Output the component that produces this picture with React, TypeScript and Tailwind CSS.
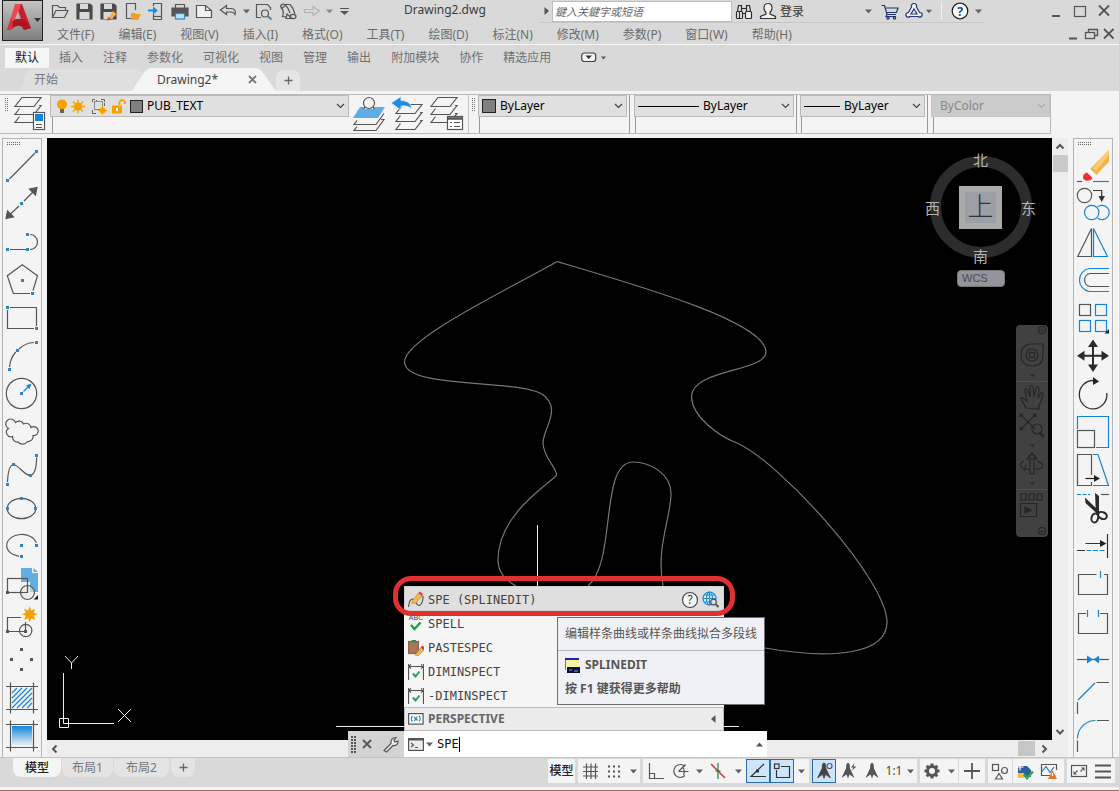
import React, { useState } from "react";

type Kids = { children?: React.ReactNode };

const G = "#555";
const B = "#1485d6";

/* ---------- small drawing helpers ---------- */

function Dot({ x, y, c = "#2f86bd" }: { x: number; y: number; c?: string }) {
  return <rect x={Math.round(x - 1.5)} y={Math.round(y - 1.5)} width="3" height="3" fill={c} stroke="none" />;
}

function Icon({ w = 22, h = 20, children }: Kids & { w?: number; h?: number }) {
  return (
    <svg width={w} height={h} viewBox={`0 0 ${w} ${h}`} fill="none" stroke={G} strokeWidth="1.2" aria-hidden="true">
      {children}
    </svg>
  );
}

function Caret({ c = "#606060" }: { c?: string }) {
  return (
    <svg width="7" height="5" viewBox="0 0 7 5" aria-hidden="true">
      <path d="M0 0.5H7L3.5 4.5Z" fill={c} />
    </svg>
  );
}

function Chevron({ c = "#444" }: { c?: string }) {
  return (
    <svg className="pointer-events-none shrink-0" width="9" height="6" viewBox="0 0 9 6" fill="none" stroke={c} strokeWidth="1.2" aria-hidden="true">
      <path d="M1 1L4.5 4.5L8 1" />
    </svg>
  );
}

/* ---------- left and right tool columns ---------- */

type Tool = { name: string; art: React.ReactNode };

const hatchFrame = <path d="M7.5 4.5V35.5M30.5 4.5V35.5M3 8.5H35M3 31.5H35" />;

const drawTools: Tool[] = [
  { name: "直线", art: (<><path d="M6.500 33L32 7" /><Dot x={4.700} y={34.700} /><Dot x={33.700} y={5} /></>) },
  {
    name: "构造线",
    art: (<><path d="M7 30.500L16 22M21 17L30 8" /><path d="M3 34.500L4.500 27L10.500 33ZM34 3.500L32.500 11L26.500 5Z" fill={G} /><Dot x={18.500} y={19.300} /></>),
  },
  { name: "多段线", art: (<><path d="M7 27.500H23M27 12.500A7.500 7.500 0 0 1 27 27.500" /><Dot x={4.700} y={27.500} /><Dot x={24.700} y={27.500} /><Dot x={24.700} y={12.500} /></>) },
  { name: "多边形", art: (<><path d="M27 33.500H10.300L4.300 15.700L19.300 4.700L34.500 15.700L30 30.500" /><Dot x={19.500} y={20.300} /><Dot x={29.500} y={33.300} /></>) },
  { name: "矩形", art: (<><path d="M7 9.500H33.500V28M31 30.500H4.500V12" /><Dot x={4.700} y={9.500} /><Dot x={33.700} y={30.500} /></>) },
  { name: "圆弧", art: (<><path d="M6.500 31Q7.500 21.500 12.800 16M16 13Q22 7 31 6.500" /><Dot x={6.300} y={33.300} /><Dot x={14.300} y={14.500} /><Dot x={33.700} y={6.500} /></>) },
  {
    name: "圆",
    art: (<><circle cx="18.500" cy="19.500" r="15.200" /><path d="M20.500 17.500L25 13" stroke={B} /><path d="M28.500 9.500L26.500 15L23 11.500Z" fill={B} stroke="none" /><Dot x={18.500} y={19.500} /></>),
  },
  {
    name: "修订云线",
    art: (<path d="M5.500 16.500A5 5 0 1 1 12.500 10.500A5 5 0 0 1 20.500 12A5 5 0 0 1 28 15.500A4.500 4.500 0 1 1 30 23.500A5 5 0 0 1 24.500 29.500A6 6 0 0 1 15 30A5 5 0 0 1 9.500 24.500A4.500 4.500 0 0 1 5.500 16.500Z" />),
  },
  { name: "样条曲线", art: (<><path d="M4.500 32C5 20 7 15 10.300 14.500C15 14.500 21 25 27 25.500C32 25 33.500 15 33.700 7.500" /><Dot x={4.500} y={34.300} /><Dot x={10.300} y={14.500} /><Dot x={27.700} y={25.300} /><Dot x={33.700} y={5} /></>) },
  { name: "椭圆", art: (<><ellipse cx="18.500" cy="20.500" rx="14.200" ry="10.200" /><Dot x={18.500} y={10.300} /><Dot x={4.500} y={20.500} /><Dot x={32.700} y={20.500} /></>) },
  { name: "椭圆弧", art: (<><path d="M33.300 17A15 11 0 1 0 16 30.300" /><Dot x={33.700} y={19.500} /><Dot x={18.500} y={19.500} /><Dot x={18.500} y={30.300} /></>) },
  {
    name: "插入块",
    art: (
      <>
        <path d="M18 4H29V9H35V28H27V18H18Z" fill="#62aee2" stroke="none" />
        <path d="M30.500 4L35 8H30.500Z" fill="#62aee2" stroke="none" />
        <rect x="4.500" y="14.500" width="20" height="14" />
        <circle cx="24.500" cy="28.500" r="7" fill="#e6e6e6" fillOpacity="0.600" />
        <path d="M24.500 21V28.500H17" />
        <rect x="3" y="27" width="3" height="3" fill={G} stroke="none" />
        <path d="M35 31V35.500H30.500Z" fill="#222" stroke="none" />
      </>
    ),
  },
  {
    name: "创建块",
    art: (
      <>
        <path d="M18 15.500H4.500V29.500H22.500V20" />
        <circle cx="22.700" cy="28.500" r="6.200" />
        <rect x="3" y="28" width="3" height="3" fill={G} stroke="none" />
        <rect x="21" y="28" width="3" height="3" fill={G} stroke="none" />
        <path d="M26.700 4.300L28.200 8.500L32.300 6.700L30.600 10.800L34.800 12.300L30.600 13.800L32.300 17.900L28.200 16.200L26.700 20.300L25.200 16.200L21.100 17.900L22.800 13.800L18.700 12.300L22.800 10.800L21.100 6.700L25.200 8.500Z" fill="#f3a200" stroke="none" />
      </>
    ),
  },
  { name: "点", art: (<g fill={G} stroke="none"><rect x="17" y="8" width="3" height="3" /><rect x="7" y="18" width="3" height="3" /><rect x="27" y="18" width="3" height="3" /><rect x="17" y="28" width="3" height="3" /></g>) },
  {
    name: "图案填充",
    art: (<><path d="M9 15L14 10M9 20L19 10M9 25L24 10M9 30L29 10M14 30L29 15M19 30L29 20M24 30L29 25" stroke={B} strokeWidth="1.2" />{hatchFrame}</>),
  },
  {
    name: "渐变色",
    art: (
      <>
        <defs>
          <linearGradient id="fade" x1="0" y1="0" x2="0" y2="1">
            <stop offset="0" stopColor="#0f86e0" />
            <stop offset="1" stopColor="#f4f4f4" />
          </linearGradient>
        </defs>
        <rect x="9" y="10" width="20" height="20" fill="url(#fade)" stroke="none" />
        {hatchFrame}
      </>
    ),
  },
];

const modifyTools: Tool[] = [
  {
    name: "删除",
    art: (
      <>
        <path d="M3 35.500H8" />
        <path d="M19 35.500H35" stroke={B} />
        <path d="M16 23L35 4V15.500L22.500 29Z" fill="#f2b347" stroke="none" />
        <path d="M30 9L35 4V9L22 25L19 22Z" fill="#f9cd74" stroke="none" />
        <path d="M13.500 25.500L16 23L22.500 29L19.500 32Z" fill="#fff" stroke="none" />
        <path d="M13 26.500L18.500 32C17 35 12 36 9.500 33C8 30 10 27.500 13 26.500Z" fill="#ee2f36" stroke="none" />
      </>
    ),
  },
  {
    name: "复制",
    art: (
      <>
        <circle cx="10.500" cy="11.500" r="7.200" />
        <path d="M19 6.500H27.700V13" stroke="#333" />
        <path d="M24.500 12H31L27.700 18Z" fill="#333" stroke="none" />
        <circle cx="17.700" cy="28.500" r="7.200" stroke={B} />
        <path d="M23.500 22.900A7.200 7.200 0 1 1 23.500 34.100" stroke={B} />
      </>
    ),
  },
  { name: "镜像", art: (<><path d="M3.700 34.500L17.500 6.500V34.500Z" /><path d="M33.500 34.500L19.500 6.500V34.500Z" stroke={B} /></>) },
  { name: "偏移", art: (<><path d="M35 8.500H15A11.700 11.700 0 0 0 15 31.500H35" stroke={B} /><path d="M35 13.500H16A6.600 6.600 0 0 0 16 26.500H35" /></>) },
  {
    name: "阵列",
    art: (<><rect x="5.500" y="6.500" width="11" height="11" /><g stroke={B}><rect x="21.500" y="6.500" width="11" height="11" /><rect x="5.500" y="22.500" width="11" height="11" /><rect x="21.500" y="22.500" width="11" height="11" /></g><path d="M35 31V35.500H30.500Z" fill="#222" stroke="none" /></>),
  },
  {
    name: "移动",
    art: (<><path d="M19 8V32M7 19.700H31" stroke="#2b2b2b" strokeWidth="2" /><path d="M19 3.500L24 11H14ZM19 36L14 28.500H24ZM3 19.700L10.500 14.700V24.700ZM35 19.700L27.500 24.700V14.700Z" fill="#2b2b2b" stroke="none" /></>),
  },
  { name: "旋转", art: (<><path d="M19 6.500A13.800 14.200 0 1 0 32.800 19" stroke="#333" strokeWidth="1.300" /><path d="M19 3V11L25 7.500Z" fill="#222" stroke="none" /></>) },
  { name: "缩放", art: (<><path d="M3.500 17V4.500H34.500V35.500H22" stroke={B} /><rect x="3.500" y="18.500" width="17" height="17" /></>) },
  {
    name: "拉伸",
    art: (<><path d="M17.500 25V4.500H3.500V35.500H17.500V32" /><path d="M19 4.500H24L34.500 35.500H19" stroke={B} /><path d="M11.500 28.500H21" stroke="#222" /><path d="M20 25L26 28.500L20 32Z" fill="#222" stroke="none" /></>),
  },
  {
    name: "修剪",
    art: (
      <>
        <path d="M3 6.500H16" stroke={B} strokeDasharray="4 1.500" />
        <path d="M27 6.500H35" />
        <path d="M11 9.500L26 24L23.500 26L11.500 15ZM21 5L25 8V25L22 26.500Z" fill="#2b2b2b" stroke="none" />
        <ellipse cx="20.800" cy="30" rx="3.300" ry="4.500" stroke="#2b2b2b" strokeWidth="2" transform="rotate(15 20.800 30)" />
        <ellipse cx="28.500" cy="27.500" rx="3.300" ry="4.500" stroke="#2b2b2b" strokeWidth="2" transform="rotate(-65 28.500 27.500)" />
      </>
    ),
  },
  {
    name: "延伸",
    art: (<><path d="M33.500 8V32M3 24.500H11M11.500 17.500H28" stroke="#333" /><path d="M26 14V21L32.500 17.500Z" fill="#222" stroke="none" /><path d="M12.500 24.500H32" stroke={B} strokeDasharray="5 1.500" /></>),
  },
  { name: "打断于点", art: (<><path d="M22.500 10.500H4.500V30.500H33.500V10.500H30" /><path d="M26.500 7V14" stroke={B} /></>) },
  { name: "打断", art: (<><path d="M12 11.500H4.500V31.500H33.500V11.500H26" /><path d="M13.500 8V15M24.500 8V15" stroke={B} /></>) },
  { name: "合并", art: (<><path d="M3 19.500H35" /><path d="M13 15.500L19 19.500L13 23.500ZM25 15.500L19.500 19.500L25 23.500Z" fill={B} stroke="none" /></>) },
  { name: "倒角", art: (<><path d="M22.500 4.500H35M3.500 24V36" /><path d="M21 5L4 22" stroke={B} /></>) },
  { name: "圆角", art: (<><path d="M23 4.500H35M3.500 24.500V36" /><path d="M21.500 4.500C12 4.500 3.500 12 3.500 22.500" stroke={B} /></>) },
];

function Grip() {
  return (
    <svg width="14" height="4" viewBox="0 0 14 4" stroke="#666" strokeDasharray="1 1" aria-hidden="true">
      <path d="M0 0.500H14M0 2.500H14" />
    </svg>
  );
}

function ToolColumn({ tools, label }: { tools: Tool[]; label: string }) {
  return (
    <nav aria-label={label} className="flex w-10 shrink-0 flex-col border-x border-t border-[#b4b4b4] bg-[#f4f4f4]">
      <div className="flex h-[7px] items-end pl-1">
        <Grip />
      </div>
      {tools.map((t) => (
        <button key={t.name} aria-label={t.name} className="h-[38px] w-[38px] hover:bg-[#dcebf7]">
          <svg width="38" height="38" viewBox="0 0 38 38" fill="none" stroke={G} strokeWidth="1.200" aria-hidden="true">
            {t.art}
          </svg>
        </button>
      ))}
    </nav>
  );
}

/* ---------- title bar ---------- */

function TitleButton({ name, width = "w-6", children }: Kids & { name: string; width?: string }) {
  return (
    <button aria-label={name} className={`flex h-[22px] shrink-0 items-center justify-center ${width}`}>
      {children}
    </button>
  );
}

function QuickAccess() {
  return (
    <div className="flex items-center">
      <TitleButton name="打开">
        <Icon><path d="M3.500 16.500V4.500H8.500L10.500 6.500H16.500V9M3.500 16.500L7 9.500H19L15.500 16.500Z" /></Icon>
      </TitleButton>
      <TitleButton name="保存">
        <Icon><path d="M4 3H17L19 5V18H4Z" fill="#4a4a4a" stroke="#4a4a4a" /><rect x="7" y="3" width="8" height="5" fill="#d9d9d9" stroke="none" /><rect x="6.500" y="11" width="10" height="7" fill="#d9d9d9" stroke="none" /></Icon>
      </TitleButton>
      <TitleButton name="另存为">
        <Icon><path d="M4 3H17L19 5V18H4Z" fill="#4a4a4a" stroke="#4a4a4a" /><rect x="7" y="3" width="8" height="5" fill="#d9d9d9" stroke="none" /><rect x="6.500" y="11" width="9" height="7" fill="#d9d9d9" stroke="none" /><path d="M11 17L16 10L19.500 13L14 19Z" fill="#f6b04a" stroke="none" /><path d="M11 16L15 18.500L10 19.500Z" fill="#e03a3a" stroke="none" /></Icon>
      </TitleButton>
      <TitleButton name="从移动设备打开">
        <Icon><path d="M14.500 9V2.500H5.500V17.500H10" /><path d="M10 12H14L15 13H20L17 19H10Z" fill="#f0a020" stroke="none" /></Icon>
      </TitleButton>
      <TitleButton name="保存到移动设备">
        <Icon><path d="M8.500 5V2.500H16.500V18.500H8.500V13" /><path d="M8 15.500H16" /><path d="M3 8.500H8V5.500L13 9.500L8 13.500V10.500H3Z" fill="#1b8be0" stroke="none" /></Icon>
      </TitleButton>
      <TitleButton name="打印">
        <Icon><path d="M6.500 7V3.500H15.500V7" /><path d="M3 7H19V15H16V12H6V15H3Z" fill="#555" stroke="#555" /><rect x="6.500" y="12.500" width="9" height="5.500" fill="#bfe0f7" stroke="#3a88c0" /></Icon>
      </TitleButton>
      <TitleButton name="新建">
        <Icon><path d="M3.500 4.500H12.500L18.500 9.500V16.500H3.500Z" fill="#efefef" /><path d="M12.500 4.500V9.500H18.500" /></Icon>
      </TitleButton>
      <TitleButton name="放弃">
        <Icon><path d="M3.500 9L9.500 4.500V7.500H14C18 7.500 19 10.500 18 13.500C17 11.500 15.500 11 13.500 11H9.500V13.500Z" /></Icon>
      </TitleButton>
      <TitleButton name="放弃列表" width="w-3"><Caret /></TitleButton>
      <TitleButton name="打印预览">
        <Icon><path d="M8 16.500H3.500V3.500H14.500L17.500 6.500V9" /><circle cx="12" cy="12.500" r="3.500" /><path d="M14.500 15L18.500 18.500" strokeWidth="1.800" stroke="#4b7fa6" /></Icon>
      </TitleButton>
      <TitleButton name="打印设置">
        <Icon><path d="M9.500 16L5.500 15.500C7 12 6 8 3.500 5.500C4 3.500 6 2.500 8 3.500L13 3.500C15.500 6 17 9 18 13" /><path d="M8 3.500C10.500 6 12 9 13 12M4 8L10 3" /><ellipse cx="16" cy="15.500" rx="3" ry="2.200" /><path d="M10 13L15 17.500L9 17.500Z" /></Icon>
      </TitleButton>
      <TitleButton name="重做">
        <Icon><path d="M3.500 8.500H12V5.500L18.500 10L12 14.500V11.500H3.500Z" stroke="#b3b3b3" /></Icon>
      </TitleButton>
      <TitleButton name="重做列表" width="w-[10px]"><Caret c="#8a8a8a" /></TitleButton>
      <TitleButton name="自定义快速访问工具栏" width="w-5">
        <svg width="9" height="8" viewBox="0 0 9 8" aria-hidden="true"><path d="M0 1H9V2H0ZM0 4H9L4.500 8Z" fill="#555" /></svg>
      </TitleButton>
    </div>
  );
}

function TitleRow() {
  return (
    <div className="flex h-6 items-start pl-[5px]">
      <QuickAccess />
      <span className="ml-[50px] h-[22px] w-[136px] shrink-0 text-[12px] leading-[20px] text-[#3c3c3c]">Drawing2.dwg</span>
      <div className="flex h-[23px] items-center border-b border-[#c6c6c6]">
        <TitleButton name="搜索选项" width="w-3">
          <svg width="5" height="8" viewBox="0 0 5 8" aria-hidden="true"><path d="M0.500 0V8L5 4Z" fill="#555" /></svg>
        </TitleButton>
        <input
          aria-label="搜索"
          placeholder="鍵入关鍵字或短语"
          className="h-[21px] w-[180px] border border-[#bdbdbd] bg-white px-[2px] text-[11px] italic outline-none placeholder:text-[#666]"
        />
        <TitleButton name="查找">
          <Icon><g stroke="#2b2b2b"><rect x="3.500" y="10.500" width="6" height="7" rx="1" fill="#efefef" /><rect x="12.500" y="10.500" width="6" height="7" rx="1" fill="#efefef" /><path d="M4.500 10.500L5.500 4.500H8.500V10.500M17.500 10.500L16.500 4.500H13.500V10.500M9 7.500H13M9.500 12.500H12.500M6.500 10.500V17" /></g></Icon>
        </TitleButton>
        <TitleButton name="用户">
          <Icon><path d="M11 2.500C14 2.500 15 4.500 15 7C15 9 14 10.500 13 11.500V13L18.500 15.500V17.500H3.500V15.500L9 13V11.500C8 10.500 7 9 7 7C7 4.500 8 2.500 11 2.500Z" fill="#f2f2f2" stroke="#333" /></Icon>
        </TitleButton>
        <button className="h-[21px] w-[82px] text-left text-[12px] leading-[21px] text-[#333]">登录</button>
        <TitleButton name="登录列表" width="w-3"><Caret /></TitleButton>
        <span className="w-1" />
        <TitleButton name="应用商店">
          <Icon><g stroke="#22356e"><path d="M2.500 4.500H5.500L8 13.500H17M6.500 7H19L17.500 11.500H8M8 13.500L7 15.500H17" /><circle cx="9" cy="17" r="1.200" /><circle cx="15.500" cy="17" r="1.200" /></g></Icon>
        </TitleButton>
        <TitleButton name="保持连接">
          <Icon><g stroke="#22356e" fill="#eef1fa"><path d="M11 2.500C13 2.500 14 4 13.500 6L16.500 11.500C19 11.500 19.500 13 19 14.500C18.500 16.500 16 16.500 15 15.500H7C6 16.500 3.500 16.500 3 14.500C2.500 13 3.500 11.500 5.500 11.500L8.500 6C8 4 9 2.500 11 2.500Z" /><path d="M11 8L14 13H8Z" /></g></Icon>
        </TitleButton>
        <TitleButton name="连接列表" width="w-[6px]"><Caret /></TitleButton>
        <span className="ml-[9px] mr-[6px] h-[18px] w-px bg-[#f0f0f0]" />
        <TitleButton name="帮助">
          <svg width="18" height="18" viewBox="0 0 18 18" aria-hidden="true">
            <circle cx="9" cy="9" r="7.800" fill="#fff" stroke="#222" strokeWidth="1.300" />
            <text x="9" y="13.500" fontSize="13" fontWeight="700" textAnchor="middle" fill="#1d4fa0" fontFamily="Noto Sans">?</text>
          </svg>
        </TitleButton>
        <TitleButton name="帮助列表" width="w-3"><Caret /></TitleButton>
      </div>
      <div className="ml-auto flex items-center pr-[3px]">
        <TitleButton name="最小化"><Icon><path d="M7 15H15" strokeWidth="2" /></Icon></TitleButton>
        <TitleButton name="最大化"><Icon><rect x="5.500" y="5.500" width="11" height="10" /></Icon></TitleButton>
        <TitleButton name="关闭"><Icon><path d="M6 4.500L16 14.500M16 4.500L6 14.500" strokeWidth="1.800" /></Icon></TitleButton>
      </div>
    </div>
  );
}

const menus = ["文件(F)", "编辑(E)", "视图(V)", "插入(I)", "格式(O)", "工具(T)", "绘图(D)", "标注(N)", "修改(M)", "参数(P)", "窗口(W)", "帮助(H)"];
const ribbonTabs = ["默认", "插入", "注释", "参数化", "可视化", "视图", "管理", "输出", "附加模块", "协作", "精选应用"];

function Header() {
  return (
    <header className="bg-[#d9d9d9]">
      <div className="flex border-b border-[#f7f7f7] pl-[2px]">
        <button aria-label="应用程序菜单" className="flex h-[41px] w-[41px] shrink-0 items-center justify-center border border-[#222] bg-linear-to-b from-[#c4c4c4] to-[#808080]">
          <svg width="39" height="39" viewBox="0 0 39 39" aria-hidden="true">
            <path d="M12 3H19L28 27L21 29L18 22H11L10 17H16.500L14 10Z" fill="#c8202a" />
            <path d="M12 3H18L13 20L9 28L4 29Z" fill="#ea4a4d" />
            <path d="M15 10L18 18H12Z" fill="#b4b4b4" />
            <path d="M4 29L9 21C13 17 20 17 23 20L28 27L21 29C19 24 14 23 9 28Z" fill="#b0141f" />
            <path d="M4 29L8 17L10 22L9 28Z" fill="#d8343a" />
            <path d="M31 17H38L34.500 21Z" fill="#333" />
          </svg>
        </button>
        <div className="min-w-0 flex-1">
          <TitleRow />
          <div className="flex h-5 items-center">
            <nav aria-label="菜单栏" className="flex gap-6 pt-[2px] pl-[14px]">
              {menus.map((m) => (
                <a key={m} href="#" className="text-[12px] leading-5 whitespace-nowrap text-[#6b6b6b]">{m}</a>
              ))}
            </nav>
            <div className="ml-auto flex pr-[1px]">
              <button aria-label="最小化图形" className="w-[18px]"><svg width="18" height="16" viewBox="0 0 18 16" aria-hidden="true"><path d="M5 12.500H13" stroke={G} strokeWidth="2" /></svg></button>
              <button aria-label="还原图形" className="w-[18px]"><svg width="18" height="16" viewBox="0 0 18 16" fill="none" stroke={G} strokeWidth="1.300" aria-hidden="true"><path d="M6.500 6.500V3.500H15.500V9.500H12.500" /><rect x="3.500" y="6.500" width="9" height="6" /></svg></button>
              <button aria-label="关闭图形" className="w-[18px]"><svg width="18" height="16" viewBox="0 0 18 16" aria-hidden="true"><path d="M4 3L13.500 12.500M13.500 3L4 12.500" stroke={G} strokeWidth="1.800" /></svg></button>
            </div>
          </div>
        </div>
      </div>

      <div className="flex h-6 items-center pl-[5px] pt-[1px]">
        {ribbonTabs.map((t, i) => (
          <button
            key={t}
            className={i === 0 ? "h-5 bg-[#f6f6f6] px-[10px] text-[12px] leading-5 whitespace-nowrap text-[#222]" : "h-5 px-[10px] text-[12px] leading-5 whitespace-nowrap text-[#707070]"}
          >
            {t}
          </button>
        ))}
        <button aria-label="功能区显示" className="ml-5 flex items-center gap-1">
          <svg width="16" height="11" viewBox="0 0 16 11" fill="none" aria-hidden="true"><rect x="0.700" y="1" width="14" height="8.500" rx="2.500" fill="#f4f4f4" stroke="#3b4453" strokeWidth="1.200" /><path d="M4.500 3.500H11L7.700 7Z" fill="#333" /></svg>
          <svg width="5" height="4" viewBox="0 0 5 4" aria-hidden="true"><path d="M0 0.500H5L2.500 3.500Z" fill="#555" /></svg>
        </button>
      </div>

      <div className="flex h-[22px] items-end pl-[20px]">
        <button className="h-[22px] w-[126px] rounded-t-[14px] bg-[#dfdfdf] pl-[14px] text-left text-[12px] leading-[22px] text-[#777] [clip-path:polygon(8px_0,100%_0,100%_100%,0_100%)]">开始</button>
        <div className="-ml-[14px] flex h-[23px] w-[144px] items-center bg-[#f5f5f5] pl-[25px] [clip-path:polygon(18px_0,124px_0,129px_2px,144px_100%,0_100%,13px_3px)]">
          <button className="w-[91px] text-left text-[12px] text-[#444]">Drawing2*</button>
          <button aria-label="关闭 Drawing2" className="shrink-0"><svg width="9" height="9" viewBox="0 0 9 9" aria-hidden="true"><path d="M1 1L8 8M8 1L1 8" stroke="#777" strokeWidth="1.800" /></svg></button>
        </div>
        <button aria-label="新图形" className="flex h-[21px] w-[24px] items-center justify-center rounded-t-[8px] bg-[#e6e6e6]">
          <svg width="9" height="9" viewBox="0 0 9 9" aria-hidden="true"><path d="M4.500 0.500V8.500M0.500 4.500H8.500" stroke="#666" strokeWidth="1.300" /></svg>
        </button>
      </div>
    </header>
  );
}

/* ---------- property toolbar ---------- */

function VGrip() {
  return (
    <svg className="mx-[3px] mt-[3px] shrink-0" width="3" height="14" viewBox="0 0 3 14" stroke="#777" strokeDasharray="1 1" aria-hidden="true">
      <path d="M0.500 0V14M2.500 0V14" />
    </svg>
  );
}

function Combo({ label, value, options, disabled, children }: Kids & { label: string; value: string; options: string[]; disabled?: boolean }) {
  const [v, setV] = useState(value);
  return (
    <div className={disabled ? "flex h-[22px] items-center border border-[#c6c6c6] bg-[#cbcbcb] pr-[3px] pl-1" : "flex h-[22px] items-center border border-[#b9b9b9] bg-[#e0e0e0] pr-[3px] pl-[3px]"}>
      {children}
      <select
        aria-label={label}
        value={v}
        disabled={disabled}
        onChange={(e) => setV(e.target.value)}
        className="min-w-0 flex-1 appearance-none bg-transparent pl-[4px] text-[12px] leading-[20px] text-black outline-none disabled:text-[#888] disabled:opacity-100"
      >
        {options.map((o) => <option key={o}>{o}</option>)}
      </select>
      <Chevron c={disabled ? "#aaa" : "#444"} />
    </div>
  );
}

function Sheets({ x = 0, y = 0 }: { x?: number; y?: number }) {
  return (
    <g transform={`translate(${x} ${y})`}>
      <path d="M8 1.500H27L20 10.500H1Z" />
      <path d="M5.500 12.500L1 18.500H20L27 9.500H25" />
      <path d="M5.500 20.500L1 26.500H20L27 17.500H25" />
    </g>
  );
}

function PropertyBar() {
  return (
    <div className="flex h-[40px] border-y border-[#b9b9b9] pl-[2px]">
      <div className="flex border-r border-[#c4c4c4]">
        <VGrip />
        <button aria-label="图层特性" className="h-[38px] w-[36px]">
          <svg width="36" height="38" viewBox="0 0 36 38" fill="none" stroke={G} strokeWidth="1.200" aria-hidden="true">
            <Sheets x={3} y={1} />
            <rect x="22.500" y="17.500" width="11" height="17" fill="#fff" />
            <rect x="24" y="19" width="8" height="7" fill="#1485d6" stroke="none" />
            <path d="M25 29.500H31M25 32.500H31" />
          </svg>
        </button>
        <div className="flex w-[302px] flex-col pl-[3px]">
          <Combo label="图层" value="PUB_TEXT" options={["PUB_TEXT", "0"]}>
            <svg width="89" height="19" viewBox="0 0 89 19" fill="none" aria-hidden="true">
              <circle cx="8" cy="7.500" r="5" fill="#f3a200" />
              <path d="M6 12H10V16H6Z" fill="#666" />
              <circle cx="24" cy="9.500" r="4" fill="#f3a200" />
              <path d="M24 2.500V16.500M17 9.500H31M19 4.500L29 14.500M29 4.500L19 14.500" stroke="#f3a200" strokeWidth="1.300" />
              <path d="M41 2.500H38.500V5M47 2.500H50.500V5M38.500 13V16.500H42M41 5L43 3M50.500 6V9" stroke="#666" />
              <rect x="40.500" y="4.500" width="8" height="8" stroke="#888" />
              <circle cx="48.500" cy="13.500" r="3" fill="#f3a200" />
              <path d="M48.500 9V18M44 13.500H53" stroke="#f3a200" />
              <rect x="58" y="8.500" width="10" height="8" fill="#f3a200" />
              <path d="M65.500 8V5A3 3 0 0 1 71 5V7" stroke="#f3a200" strokeWidth="1.800" />
              <rect x="62" y="11" width="2" height="3" fill="#fff" />
              <rect x="76.500" y="3.500" width="12" height="12" fill="#808080" stroke="#222" />
            </svg>
          </Combo>
          <span className="ml-[2px] flex-1 border-l border-[#999]" />
        </div>
        <div className="flex gap-[4px] pr-[3px] pl-[3px]">
          <button aria-label="将对象的图层设为当前" className="w-[35px]">
            <svg width="35" height="38" viewBox="0 0 35 38" fill="none" stroke={G} strokeWidth="1.200" aria-hidden="true">
              <path d="M8 12H33L26 23H1Z" fill="#5badea" stroke="none" />
              <path d="M12 14C12 10 22 10 22 14" fill="#f4f4f4" />
              <circle cx="17" cy="8" r="5.500" fill="#f4f4f4" />
              <path d="M5 25.500L2 29.500H24L32 18.500M5 31.500L2 35.500H24L32 24.500H29" />
            </svg>
          </button>
          <button aria-label="上一个图层" className="w-[35px]">
            <svg width="35" height="38" viewBox="0 0 35 38" fill="none" stroke={G} strokeWidth="1.200" aria-hidden="true">
              <g transform="translate(4 8)"><Sheets /></g>
              <path d="M0 8L10 1.500V5.500C16 5.500 20 8 21 14C17 11 14 10.500 10 11V15Z" fill="#1a8ce6" stroke="#f4f4f4" strokeWidth="0.800" />
            </svg>
          </button>
          <button aria-label="图层状态" className="w-[35px]">
            <svg width="35" height="38" viewBox="0 0 35 38" fill="none" stroke={G} strokeWidth="1.200" aria-hidden="true">
              <Sheets y={1} />
              <rect x="17.500" y="21.500" width="15" height="13" fill="#fff" />
              <path d="M17.500 23.500H32.500" strokeWidth="2.500" />
              <path d="M20 27.500H22M24 27.500H30M20 31.500H22M24 31.500H30" />
            </svg>
          </button>
        </div>
      </div>
      <div className="flex">
        <VGrip />
        <div className="flex w-[152px] flex-col border-r border-[#999]">
          <div className="mr-[2px]">
            <Combo label="颜色" value="ByLayer" options={["ByLayer", "ByBlock"]}>
              <span className="h-[14px] w-[14px] border border-[#222] bg-[#808080]" />
            </Combo>
          </div>
          <span className="ml-[1px] flex-1 border-l border-[#999]" />
        </div>
        <div className="ml-[4px] flex w-[163px] flex-col border-r border-[#999]">
          <div className="mr-[2px]">
            <Combo label="线型" value="ByLayer" options={["ByLayer", "Continuous"]}>
              <span className="h-px w-[61px] bg-black" />
            </Combo>
          </div>
          <span className="ml-[1px] flex-1 border-l border-[#999]" />
        </div>
        <div className="ml-[3px] flex w-[128px] flex-col border-r border-[#999]">
          <div className="mr-[2px]">
            <Combo label="线宽" value="ByLayer" options={["ByLayer", "0.25"]}>
              <span className="h-px w-[36px] bg-black" />
            </Combo>
          </div>
          <span className="ml-[1px] flex-1 border-l border-[#999]" />
        </div>
        <div className="ml-[3px] flex w-[120px] flex-col border-r border-[#b9b9b9]">
          <Combo label="打印样式" value="ByColor" options={["ByColor"]} disabled />
          <span className="ml-[2px] flex-1 border-l border-[#999]" />
        </div>
      </div>
      <span className="-my-px flex-1 bg-[#f4f4f4]" />
    </div>
  );
}

/* ---------- canvas ---------- */

function Drawing() {
  return (
    <svg className="absolute top-0 left-0" width="1005" height="602" viewBox="47 138 1005 602" fill="none" aria-label="图形">
      <g stroke="#777" strokeWidth="1.200">
        <path d="M557 261.500C519 284 404 338 404.500 362C405 389 515 379 542 394C563 409 543 428 543 443C543 457 557 468 556.500 475C554 481 498 512 498 560C498 573 506 580 516 586" />
        <path d="M557 261.500C640 286 766 322 766 352C766 372 691 369 691.500 397C692 416 718 436 737 443C780 462 887 580 887 622C887 654 834 660 765 648" />
        <path d="M588 586C617 562 599 462 633 462C650 462 672 474 671 495C670 520 656 548 663 586" />
      </g>
      <g stroke="#eee">
        <path d="M537.500 525V590M336 726.500H739" />
        <path d="M63.500 673V723.500H114M59.500 718.500H68.500V727.500H59.500ZM118 709L131 722M131 709L118 722M65 656L71.500 663L78 656M71.500 663V669" />
      </g>
    </svg>
  );
}

function ViewCube() {
  return (
    <div className="absolute top-[12px] right-[14px] w-[114px]">
      <div className="relative h-[120px] font-['Liberation_Serif','Noto_Sans_CJK_SC',serif] text-[15px] leading-[18px] text-[#b5b5b5]">
        <div className="absolute top-[6px] left-[6px] h-[102px] w-[102px] rounded-full border-[11px] border-[#2c2c2c]" />
        <button className="absolute top-[2px] left-[49px]">北</button>
        <button className="absolute top-[50px] left-[1px]">西</button>
        <button className="absolute top-[50px] left-[97px]">东</button>
        <button className="absolute top-[98px] left-[49px]">南</button>
        <button aria-label="上" className="absolute top-[36px] left-[35px] flex h-[43px] w-[43px] items-center justify-center border-[6px] border-[#a9aaa9] bg-[#9c9fa6] text-[26px] leading-[26px] font-light text-[#303238]">上</button>
      </div>
      <button className="ml-[33px] flex h-[17px] w-[48px] items-center rounded-[4px] border border-[#777] bg-[#94949c] pl-1 font-['Liberation_Sans',sans-serif] text-[11px] text-[#4a4a50]">WCS</button>
    </div>
  );
}

function NavBar() {
  return (
    <div className="absolute top-[187px] right-[4px] h-[212px] w-[32px] rounded-[4px] bg-[#414141]">
      <svg width="32" height="212" viewBox="0 0 32 212" fill="none" stroke="#262626" strokeWidth="1.200" aria-label="导航栏">
        <circle cx="26" cy="5" r="3.500" />
        <path d="M24.500 3.500L27.500 6.500M27.500 3.500L24.500 6.500" strokeWidth="0.800" />
        <path d="M5 30C5 23 9 19 16 19H27V30C27 37 23 41 16 41C9 41 5 37 5 30Z" />
        <circle cx="16" cy="30" r="6" /><rect x="13.500" y="27.500" width="5" height="5" />
        <path d="M14 49.500H19L16.500 52Z" fill="#262626" stroke="none" />
        <path d="M0 56.500H32M0 164.500H32" stroke="#505050" />
        <path d="M10 83C8 78 5 76 5 73C7 72 9 74 11 76L9 65C9 63 11 63 12 65L14 72L14 62C14 60 17 60 17 62L18 72L20 63C21 61 23 62 23 64L22 73L25 68C26 67 28 68 27 70L23 81V84Z" />
        <path d="M5 90L19 104M19 90L5 104" />
        <path d="M3.500 88.500H7V92H3.500ZM17 88.500H20.500V92H17ZM3.500 102H7V105.500H3.500Z" fill="#262626" stroke="none" />
        <circle cx="21" cy="104" r="5" /><path d="M24 108L28 112" strokeWidth="2.500" />
        <path d="M14 119.500H19L16.500 122Z" fill="#262626" stroke="none" />
        <path d="M14 132V149H18V132M11 134L16 128L21 134ZM8 136C2 139 4 145 14 144M21 136C30 139 28 145 18 144M10 140L8 146" />
        <path d="M14 157.500H19L16.500 160Z" fill="#262626" stroke="none" />
        <path d="M5 169H10V175H5ZM13 169H18V175H13ZM21 169H26V175H21ZM4.500 178.500H20.500V191.500H4.500Z" />
        <path d="M9 182L15 185L9 188Z" fill="#262626" />
        <circle cx="26" cy="206" r="3.500" /><path d="M24 206.500H28" />
      </svg>
    </div>
  );
}

/* ---------- command line and suggestions ---------- */

const dimIcon = (
  <Icon w={16} h={18}><path d="M0.500 1V17M15.500 1V17M0.500 3.500H15.500M3 1.500L0.500 3.500L3 5.500M13 1.500L15.500 3.500L13 5.500" /><path d="M5 10.500L7.500 13.500L11.500 8.500" stroke="#2c9b57" strokeWidth="2" /></Icon>
);

const suggestions = [
  {
    name: "SPELL",
    icon: (
      <Icon w={16} h={18}><text x="8" y="5" fontSize="7" textAnchor="middle" fill="#444" stroke="none" fontFamily="Liberation Sans">ABC</text><path d="M3 10L6.500 14L12.500 7.500" stroke="#14a34a" strokeWidth="2.500" /></Icon>
    ),
  },
  {
    name: "PASTESPEC",
    icon: (
      <Icon w={16} h={18}><rect x="0.500" y="2.500" width="10" height="12" fill="#a8775a" stroke="#8b6147" /><path d="M3.500 3.500V1H8V3.500Z" fill="#3b8a4f" stroke="none" /><path d="M7 16L13 8.500L16 11L10 17Z" fill="#f5b657" stroke="#b97a29" strokeWidth="0.600" /><path d="M12.500 8.500L14.500 6.500L16 8V11Z" fill="#e03535" stroke="none" /></Icon>
    ),
  },
  { name: "DIMINSPECT", icon: dimIcon },
  { name: "-DIMINSPECT", icon: dimIcon },
];

function Suggestions() {
  return (
    <div className="relative ml-[56px] flex w-[320px] flex-col bg-[#f5f5f5] font-['DejaVu_Sans_Mono','Liberation_Mono',monospace] text-[12px] text-[#444]">
      <div className="flex h-[25px] items-center gap-[3px] border border-[#cfcfcf] bg-[#dfdfdf] pt-[2px] pr-[4px] pl-[3px]">
        <Icon w={17} h={18}><path d="M0.500 16C1 10 3 7 6 8.500C8 10 8 14 11 14.500C14 14 15 9 15 5" /><path d="M4.500 9.500L10.500 2L14 5L8 12L4 12.500Z" fill="#f5b657" stroke="#b97a29" strokeWidth="0.600" /><path d="M10.500 2L12 0.500L15 3.500L14 5Z" fill="#e03535" stroke="none" /></Icon>
        <button className="flex-1 text-left">SPE (SPLINEDIT)</button>
        <button aria-label="在帮助中搜索">
          <svg width="18" height="18" viewBox="0 0 18 18" aria-hidden="true"><circle cx="9" cy="9" r="7.500" fill="#f7f7f7" stroke="#444" strokeWidth="1.200" /><text x="9" y="13.200" fontSize="12" textAnchor="middle" fill="#333" fontFamily="Noto Sans">?</text></svg>
        </button>
        <button aria-label="在互联网上搜索">
          <Icon w={17} h={17}><g stroke="#2387cc"><circle cx="7.500" cy="7.500" r="6.500" fill="#dcefff" /><ellipse cx="7.500" cy="7.500" rx="3" ry="6.500" /><path d="M1 7.500H14M2 4H13M2 11H13M7.500 1V14" /></g><circle cx="11.500" cy="11" r="2.800" fill="#ddd" /><path d="M13.500 13L16.500 16" strokeWidth="1.800" /></Icon>
        </button>
      </div>
      {suggestions.map((s) => (
        <button key={s.name} className="flex h-6 items-center gap-[4px] pt-[2px] pl-[4px] text-left">
          {s.icon}
          <span>{s.name}</span>
        </button>
      ))}
      <button className="flex h-6 items-center gap-[4px] border border-[#bdbdbd] bg-[#ececec] pr-[7px] pl-[3px] text-left font-['Noto_Sans',sans-serif] text-[12px] font-bold text-[#666]">
        <Icon w={16} h={14}><rect x="0.600" y="1.600" width="14.500" height="10.500" fill="#fff" /><path d="M4.500 4C3 5.500 3 8 4.500 9.500M11 4C12.500 5.500 12.500 8 11 9.500M6 8.500C8 9 8 4.500 9.500 5M6 5L9.500 8.500" stroke="#1f7fc4" /></Icon>
        <span className="flex-1">PERSPECTIVE</span>
        <svg width="5" height="8" viewBox="0 0 5 8" aria-hidden="true"><path d="M4.500 0V8L0 4Z" fill="#555" /></svg>
      </button>

      <div role="tooltip" className="absolute top-[31px] left-[153px] flex h-[88px] w-[208px] flex-col border border-[#6c6c74] bg-[#f0f1f7] font-['Noto_Sans','Noto_Sans_CJK_SC',sans-serif] text-[12px] text-[#555]">
        <p className="border-b border-[#b5b5bd] pl-[7px] leading-[32px] whitespace-nowrap">编辑样条曲线或样条曲线拟合多段线</p>
        <div className="flex items-center gap-[5px] pt-[1px] pl-[7px] leading-[26px] font-bold">
          <svg width="15" height="15" viewBox="0 0 15 15" aria-hidden="true"><rect width="14" height="12" fill="#f6f3a0" /><rect width="14" height="2" fill="#1b22b8" /><rect y="2" width="1" height="10" fill="#777" /><rect x="2" y="9" width="13" height="6" fill="#0b0f33" /><path d="M4 12H7M9 13H13" stroke="#8ba0ff" /></svg>
          SPLINEDIT
        </div>
        <p className="pl-[7px] leading-[22px] font-bold">按 F1 键获得更多帮助</p>
      </div>

      <div className="pointer-events-none absolute -top-[10px] -left-[11px] h-[40px] w-[342px] rounded-[18px] border-[5px] border-[#e03030]" />
    </div>
  );
}

function CommandLine() {
  const [cmd, setCmd] = useState("SPE");
  return (
    <div className="absolute bottom-0 left-[301px] w-[419px]">
      <Suggestions />
      <div className="flex h-[26px] bg-white">
        <div className="flex w-[56px] items-center bg-[#d3d3d3] pl-[3px]">
          <svg width="6" height="17" viewBox="0 0 6 17" stroke="#555" strokeWidth="2" strokeDasharray="2 1" aria-hidden="true"><path d="M1 0V17M4 0V17" /></svg>
          <button aria-label="关闭命令行" className="ml-[5px]"><svg width="10" height="10" viewBox="0 0 10 10" aria-hidden="true"><path d="M1 1L9 9M9 1L1 9" stroke="#555" strokeWidth="1.800" /></svg></button>
          <button aria-label="自定义" className="ml-[10px]"><Icon w={18} h={18}><path d="M2 15.500L9 8.500C8.500 5 10.500 2.500 14 2.500L12 5L13 7L16 6C16.500 9 14 11 11 10.500L4.500 17Z" fill="#eee" /></Icon></button>
        </div>
        <button aria-label="最近使用的命令" className="flex items-center gap-[2px] pl-1">
          <Icon w={16} h={13}><rect x="0.600" y="0.600" width="14.800" height="11.800" fill="#eee" /><path d="M1 1.500H15" strokeWidth="2" /><path d="M3 5L5.500 7L3 9M7 9.500H10" /></Icon>
          <Caret />
        </button>
        <input
          aria-label="命令"
          value={cmd}
          onChange={(e) => setCmd(e.target.value)}
          size={3}
          className="ml-[4px] w-[22px] bg-transparent font-['DejaVu_Sans_Mono','Liberation_Mono',monospace] text-[12px] text-[#111] outline-none"
        />
        <span className="h-[15px] w-px self-center bg-black" />
        <button aria-label="展开历史" className="mr-1 ml-auto">
          <svg width="7" height="5" viewBox="0 0 7 5" aria-hidden="true"><path d="M0 4.500H7L3.500 0.500Z" fill="#555" /></svg>
        </button>
      </div>
    </div>
  );
}

function Arrow({ dir }: { dir: "up" | "down" | "left" | "right" }) {
  const d = { up: "M1.500 6.500L5 3L8.500 6.500", down: "M1.500 3L5 6.500L8.500 3", left: "M6.500 1.500L3 5L6.500 8.500", right: "M3.500 1.500L7 5L3.500 8.500" }[dir];
  return <svg width="10" height="10" viewBox="0 0 10 10" fill="none" stroke="#555" strokeWidth="2" aria-hidden="true"><path d={d} /></svg>;
}

function Workspace() {
  return (
    <main className="flex flex-1 gap-[5px] pt-[4px] pr-[6px] pl-[2px]">
      <ToolColumn tools={drawTools} label="绘图" />
      <div className="relative flex min-w-0 flex-1 flex-col">
        <div className="flex flex-1">
          <section className="relative flex-1 overflow-hidden bg-black" aria-label="绘图区">
            <Drawing />
            <ViewCube />
            <NavBar />
          </section>
          <div className="flex w-4 flex-col items-center bg-[#ededed]">
            <button aria-label="向上滚动" className="flex h-[17px] items-center"><Arrow dir="up" /></button>
            <span className="h-[17px] w-[15px] bg-[#cacaca]" />
            <button aria-label="向下滚动" className="mt-auto flex h-[17px] items-center"><Arrow dir="down" /></button>
          </div>
        </div>
        <div className="flex h-[17px] items-center bg-[#ededed] pr-[19px] pl-[3px]">
          <button aria-label="向左滚动"><Arrow dir="left" /></button>
          <span className="ml-auto h-[15px] w-[17px] bg-[#c6c6c6]" />
          <button aria-label="向右滚动" className="ml-[4px]"><Arrow dir="right" /></button>
        </div>
        <CommandLine />
      </div>
      <ToolColumn tools={modifyTools} label="修改" />
    </main>
  );
}

/* ---------- status bar ---------- */

function St({ name, width = "w-6", on, children }: Kids & { name: string; width?: string; on?: boolean }) {
  return (
    <button
      aria-label={name}
      aria-pressed={on}
      className={`flex h-6 shrink-0 items-center justify-center ${width} ${on ? "border border-[#2f6ca8] bg-[#cde5fb]" : ""}`}
    >
      {children}
    </button>
  );
}

function Group({ children }: Kids) {
  return <div className="flex h-6 items-center bg-[#f4f4f4]">{children}</div>;
}

const person = "M10 2C11.500 2 12 3.500 11.800 7L16.500 17L11.500 13.500L10 17.500L8.500 13.500L3.500 17L8.200 7C8 3.500 8.500 2 10 2Z";

function StatusBar() {
  return (
    <footer className="flex h-[30px] items-start justify-between border-t border-[#c4c4c4] bg-[#d9d9d9] pr-[4px] pl-[13px]">
      <div className="flex h-[19px] text-[12px] leading-[19px] text-[#777]">
        <button className="w-[48px] rounded-b-[8px] bg-[#f5f5f5] font-medium text-[#222]">模型</button>
        <button className="ml-[1px] w-[51px] rounded-b-[8px] bg-[#e4e4e4]">布局1</button>
        <button className="ml-[1px] w-[55px] rounded-b-[8px] bg-[#e4e4e4]">布局2</button>
        <button aria-label="新建布局" className="ml-[2px] flex w-[24px] items-center justify-center rounded-b-[8px] bg-[#e4e4e4]">
          <svg width="9" height="9" viewBox="0 0 9 9" aria-hidden="true"><path d="M4.500 0.500V8.500M0.500 4.500H8.500" stroke="#666" strokeWidth="1.300" /></svg>
        </button>
      </div>
      <div className="flex gap-[3px] pt-px">
        <Group><button className="h-6 w-[27px] text-[12px] font-medium text-[#222]">模型</button></Group>
        <Group>
          <St name="栅格"><Icon w={20}><path d="M3 6H18M3 10.500H18M3 15H18M6.500 2.500V18M11 2.500V18M15.500 2.500V18" /></Icon></St>
          <St name="捕捉"><Icon w={20}><path d="M4 5.500H18M4 10.500H18M4 15.500H18" strokeDasharray="2 3" strokeWidth="2" /></Icon></St>
          <St name="捕捉设置" width="w-[14px]"><Caret /></St>
        </Group>
        <Group>
          <St name="正交"><Icon w={20}><path d="M4.500 2V17.500H19M4.500 12.500H9.500V17.500" /></Icon></St>
          <St name="极轴追踪" width="w-[26px]"><Icon w={20}><path d="M15 5.500A6.500 6.500 0 1 0 15 14.500M8.500 10.500H18.500M8.500 10.500L15.500 3.500M13 6.500C14.500 9 14.500 12 13.500 14" /></Icon></St>
          <St name="极轴设置" width="w-3"><Caret /></St>
          <St name="等轴测" width="w-[26px]"><Icon w={20}><path d="M3 3L17 17" stroke="#d22f3c" strokeWidth="1.400" /><path d="M10 2V18" stroke="#2d9a4f" strokeWidth="1.400" /><path d="M7.500 10H12.500" /></Icon></St>
          <St name="等轴测设置" width="w-[15px]"><Caret /></St>
          <St name="对象捕捉追踪" on><Icon w={20}><path d="M16 3L3 15.500H18" stroke="#333" /><rect x="8" y="8.500" width="3" height="3" fill="#333" stroke="none" /></Icon></St>
          <St name="对象捕捉" on><Icon w={20}><path d="M9 5.500H17.500V16.500H4.500V9" stroke="#333" /><rect x="2.500" y="3" width="4.500" height="4.500" stroke="#333" /></Icon></St>
          <St name="对象捕捉设置" width="w-[15px]"><Caret /></St>
        </Group>
        <Group>
          <St name="注释可见性" on><Icon w={20}><path d={person} fill="#444" stroke="#444" strokeWidth="0.600" /><circle cx="15.500" cy="5" r="2.500" /></Icon></St>
          <St name="自动缩放"><Icon w={20}><path d={person} fill="#555" stroke="none" /><path d="M16.500 2L13 6.500H15.500L13.500 10L18.500 5.500H15.500Z" fill="#555" stroke="none" /></Icon></St>
          <St name="注释比例"><Icon w={20}><path d={person} fill="#555" stroke="none" /></Icon></St>
          <button className="h-6 w-5 text-[12px] text-[#444]">1:1</button>
          <St name="比例列表" width="w-[13px]"><Caret /></St>
        </Group>
        <Group>
          <St name="切换工作空间"><Icon w={20}><circle cx="10" cy="10" r="4.500" strokeWidth="3" /><path d="M10 2.500V5M10 15V17.500M2.500 10H5M15 10H17.500M4.700 4.700L6.500 6.500M13.500 13.500L15.300 15.300M15.300 4.700L13.500 6.500M6.500 13.500L4.700 15.300" strokeWidth="3" /></Icon></St>
          <St name="工作空间列表" width="w-[14px]"><Caret /></St>
          <span className="h-6 w-px bg-[#d9d9d9]" />
          <St name="注释监视器" width="w-[26px]"><Icon w={20}><path d="M10 2V18M2 10H18" strokeWidth="1.800" /></Icon></St>
        </Group>
        <Group>
          <St name="隔离对象"><Icon w={20}><rect x="2.500" y="3.500" width="6" height="6" /><circle cx="14.500" cy="9.500" r="3" /><path d="M9 12.500L12.500 18H5.500Z" /></Icon></St>
          <span className="h-6 w-px bg-[#d9d9d9]" />
          <St name="图形性能"><Icon w={20}><path d="M3 5H12L16 9V16H6L3 12Z" fill="#2b5f9e" stroke="none" /><rect x="3" y="12" width="6" height="5" fill="#f0c030" stroke="none" /><path d="M5 2.500V9.500M1.500 6H8.500" stroke="#fff" /><path d="M9 13.500L12 17L18 10.500" stroke="#3aa648" strokeWidth="2.500" /></Icon></St>
          <St name="性能警告"><Icon w={20}><path d="M11 14.500H2.500V3.500H17.500V9" /><path d="M3 10.500L7 5.500L11 11.500L15 6" stroke="#1f7fc4" /><path d="M13.500 9L18 18H9Z" fill="#e5772b" stroke="none" /><path d="M13.500 12V15" stroke="#fff" /></Icon></St>
          <span className="w-[3px]" />
        </Group>
        <Group>
          <St name="全屏显示"><Icon w={20}><rect x="2.500" y="4.500" width="15" height="11" /><path d="M12 6.500H15.500V10ZM4.500 10V13.500H8Z" fill={G} stroke="none" /><path d="M11.500 10.500L14.500 7.500M8.500 9.500L5.500 12.500" strokeDasharray="3 1" /></Icon></St>
          <St name="自定义"><Icon w={20}><path d="M2 4.500H18M2 10.500H18M2 16.500H18" strokeWidth="1.800" /></Icon></St>
        </Group>
      </div>
    </footer>
  );
}

export default function App() {
  return (
    <div className="flex min-h-screen flex-col bg-[#f4f4f4] font-['Noto_Sans','Noto_Sans_CJK_SC',sans-serif] text-[12px]">
      <Header />
      <div className="h-[3px]" />
      <PropertyBar />
      <Workspace />
      <StatusBar />
      <div className="h-[4px] border-b border-[#8c7268] bg-[#f4f4f4]" />
    </div>
  );
}
